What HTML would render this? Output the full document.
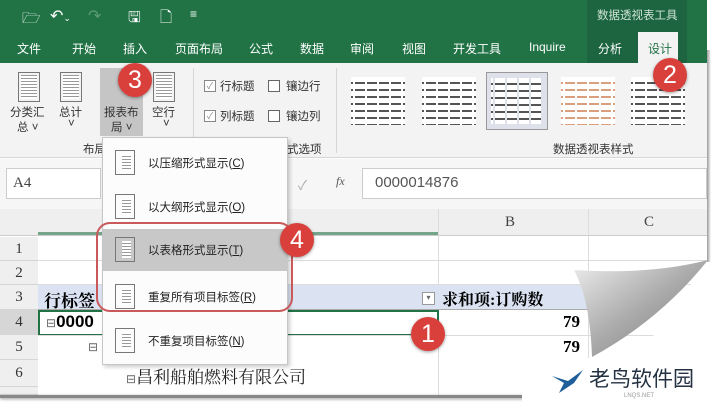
<!DOCTYPE html><html><head><meta charset="utf-8"><style>
*{margin:0;padding:0;box-sizing:border-box}
body{width:722px;height:409px;overflow:hidden;background:#fff;font-family:"Liberation Sans","Noto Sans CJK SC",sans-serif;position:relative}
.a{position:absolute}
.t{color:#fff;font-size:12px}
.r{font-size:11.5px;color:#333}
.badge{position:absolute;width:34px;height:34px;border-radius:50%;background:#d9403c;color:#fff;font-size:25px;text-align:center;line-height:34px;box-shadow:0 1px 3px rgba(0,0,0,.4)}
.rh{position:absolute;left:0;width:38px;font-family:"Liberation Serif",serif;font-size:15px;color:#333;text-align:center;border-bottom:1px solid #d5d5d5;background:#efefef}
.hl{position:absolute;left:38px;width:669px;border-bottom:1px solid #dcdcdc}
.mi{position:absolute;left:0;width:185px;height:42px;font-size:11.5px;color:#222}
.mi span{position:absolute;left:45px;top:13px}
.ic{position:absolute;left:12px;top:8px;width:20px;height:25px;border:1px solid #777;background:repeating-linear-gradient(#fff 0 2px,#999 2px 3px);background-clip:content-box;padding:3px 3px 3px 6px}
.sty{position:absolute;top:72px;width:62px;height:58px;padding:5px 4px}
.sty i{display:block;width:100%;height:100%;background:repeating-linear-gradient(90deg,transparent 0 2px,#fff 2px 4px,transparent 4px 12px),repeating-linear-gradient(#fff 0 5px,#555 5px 7px)}
</style></head><body>
<div class="a" style="left:0;top:0;width:707px;height:63px;background:#217346"></div>
<div class="a" style="left:587px;top:0;width:100px;height:63px;background:#1c6540"></div>
<div class="a t" style="left:597px;top:7px;font-size:11.5px;color:#cfe3d6">数据透视表工具</div>
<div class="a t" style="left:22px;top:8px;font-size:15px">🗁</div>
<div class="a t" style="left:50px;top:6px;font-size:16px">↶<span style="font-size:9px">⌄</span></div>
<div class="a t" style="left:88px;top:6px;font-size:16px;color:#5d9a78">↷</div>
<div class="a t" style="left:128px;top:7px;font-size:15px">🖫</div>
<div class="a t" style="left:160px;top:7px;font-size:15px">🗋</div>
<div class="a t" style="left:190px;top:7px;font-size:12px">≡</div>
<div class="a" style="left:638px;top:32px;width:40px;height:31px;background:#f3f3f3"></div>
<div class="a t" style="left:17px;top:40px">文件</div>
<div class="a t" style="left:72px;top:40px">开始</div>
<div class="a t" style="left:123px;top:40px">插入</div>
<div class="a t" style="left:175px;top:40px">页面布局</div>
<div class="a t" style="left:249px;top:40px">公式</div>
<div class="a t" style="left:300px;top:40px">数据</div>
<div class="a t" style="left:350px;top:40px">审阅</div>
<div class="a t" style="left:402px;top:40px">视图</div>
<div class="a t" style="left:453px;top:40px">开发工具</div>
<div class="a t" style="left:529px;top:40px">Inquire</div>
<div class="a t" style="left:598px;top:40px">分析</div>
<div class="a" style="left:648px;top:40px;font-size:12px;color:#217346">设计</div>
<div class="a" style="left:0;top:63px;width:707px;height:95px;background:#f3f3f3;border-bottom:1px solid #d6d6d6"></div>
<div class="a" style="left:100px;top:68px;width:43px;height:68px;background:#c5c5c5"></div>
<div class="a ic" style="left:18px;top:72px;width:22px;height:30px;padding:2px"></div>
<div class="a ic" style="left:60px;top:72px;width:22px;height:30px;padding:2px"></div>
<div class="a ic" style="left:153px;top:72px;width:22px;height:30px;padding:2px"></div>
<div class="a r" style="left:10px;top:104px">分类汇</div>
<div class="a r" style="left:17px;top:119px">总 ˅</div>
<div class="a r" style="left:59px;top:104px">总计</div>
<div class="a r" style="left:68px;top:118px">˅</div>
<div class="a r" style="left:104px;top:104px">报表布</div>
<div class="a r" style="left:111px;top:119px">局 ˅</div>
<div class="a r" style="left:152px;top:104px">空行</div>
<div class="a r" style="left:163px;top:118px">˅</div>
<div class="a r" style="left:83px;top:141px">布局</div>
<div class="a" style="left:193px;top:68px;width:1px;height:85px;background:#d6d6d6"></div>
<div class="a" style="left:336px;top:68px;width:1px;height:85px;background:#d6d6d6"></div>
<div class="a" style="left:204px;top:80px;width:12px;height:12px;border:1px solid #888;background:#fff;font-size:9px;color:#888;line-height:10px;text-align:center">✓</div>
<div class="a r" style="left:220px;top:78px">行标题</div>
<div class="a" style="left:268px;top:80px;width:12px;height:12px;border:1px solid #666;background:#fff"></div>
<div class="a r" style="left:286px;top:78px">镶边行</div>
<div class="a" style="left:204px;top:110px;width:12px;height:12px;border:1px solid #888;background:#fff;font-size:9px;color:#888;line-height:10px;text-align:center">✓</div>
<div class="a r" style="left:220px;top:108px">列标题</div>
<div class="a" style="left:268px;top:110px;width:12px;height:12px;border:1px solid #666;background:#fff"></div>
<div class="a r" style="left:286px;top:108px">镶边列</div>
<div class="a r" style="left:287px;top:141px">式选项</div>
<div class="sty" style="left:347px"><i></i></div>
<div class="sty" style="left:418px"><i></i></div>
<div class="sty" style="left:486px;background:#dfe1ea;border:1px solid #999"><i style="background:repeating-linear-gradient(90deg,transparent 0 2px,#dfe1ea 2px 4px,transparent 4px 12px),repeating-linear-gradient(#fff 0 5px,#555 5px 7px)"></i></div>
<div class="sty" style="left:557px"><i style="background:repeating-linear-gradient(90deg,transparent 0 2px,#fff 2px 4px,transparent 4px 12px),repeating-linear-gradient(#fff 0 5px,#d9a07e 5px 7px)"></i></div>
<div class="sty" style="left:627px"><i></i></div>
<div class="a r" style="left:553px;top:141px">数据透视表样式</div>
<div class="a" style="left:0;top:159px;width:707px;height:50px;background:#f6f6f6"></div>
<div class="a" style="left:6px;top:168px;width:95px;height:31px;background:#fff;border:1px solid #ccc;font-family:'Liberation Serif',serif;font-size:15px;color:#444;padding:6px 6px">A4</div>
<div class="a" style="left:298px;top:175px;color:#aaa;font-size:13px">✓</div>
<div class="a" style="left:336px;top:174px;color:#555;font-size:12px;font-style:italic;font-family:'Liberation Serif',serif">fx</div>
<div class="a" style="left:362px;top:168px;width:345px;height:31px;background:#fff;border:1px solid #ccc;font-size:15px;color:#555;padding:5px 12px">0000014876</div>
<div class="a" style="left:0;top:209px;width:707px;height:186px;background:#fff"></div>
<div class="a" style="left:0;top:209px;width:707px;height:27px;background:#efefef;border-bottom:1px solid #ccc"></div>
<div class="a" style="left:38px;top:232px;width:400px;height:3px;background:#217346;opacity:.6"></div>
<div class="a" style="left:438px;top:209px;width:1px;height:186px;background:#dcdcdc"></div>
<div class="a" style="left:588px;top:209px;width:1px;height:186px;background:#dcdcdc"></div>
<div class="a" style="left:505px;top:214px;font-family:'Liberation Serif',serif;font-size:15px;color:#444">B</div>
<div class="a" style="left:644px;top:214px;font-family:'Liberation Serif',serif;font-size:15px;color:#444">C</div>
<div class="rh" style="top:237px;height:24px;line-height:24px">1</div>
<div class="rh" style="top:261px;height:24px;line-height:24px">2</div>
<div class="rh" style="top:285px;height:25px;line-height:25px">3</div>
<div class="rh" style="top:310px;height:25px;line-height:25px;background:#d6d6d6">4</div>
<div class="rh" style="top:335px;height:25px;line-height:25px">5</div>
<div class="rh" style="top:360px;height:27px;line-height:27px">6</div>
<div class="rh" style="top:387px;height:8px"></div>
<div class="hl" style="top:236px;height:25px"></div>
<div class="hl" style="top:261px;height:24px"></div>
<div class="a" style="left:38px;top:285px;width:550px;height:25px;background:#dbe3f3;border-bottom:1px solid #aaa"></div>
<div class="a" style="left:44px;top:287px;font-family:'Liberation Serif','Noto Serif CJK SC',serif;font-size:17px;font-weight:bold">行标签</div>
<div class="a" style="left:422px;top:292px;width:13px;height:13px;border:1px solid #999;background:#fff;font-size:8px;text-align:center;color:#666">▾</div>
<div class="a" style="left:442px;top:287px;font-family:'Liberation Serif','Noto Serif CJK SC',serif;font-size:16px;font-weight:bold">求和项:订购数</div>
<div class="a" style="left:38px;top:310px;width:401px;height:26px;border:2px solid #217346"></div>
<div class="hl" style="top:335px;height:0"></div>
<div class="a" style="left:46px;top:312px;font-size:17px;font-weight:bold"><span style="font-size:12px;font-weight:normal;color:#666">⊟</span>0000</div>
<div class="a" style="left:563px;top:312px;font-family:'Liberation Serif',serif;font-size:17px;font-weight:bold">79</div>
<div class="a" style="left:563px;top:337px;font-family:'Liberation Serif',serif;font-size:17px;font-weight:bold">79</div>
<div class="a" style="left:88px;top:340px;font-size:12px;color:#666">⊟</div>
<div class="a" style="left:126px;top:363px;font-family:'Liberation Serif','Noto Serif CJK SC',serif;font-size:17px;color:#222"><span style="font-size:12px;color:#666">⊟</span>昌利船舶燃料有限公司</div>
<div class="a" style="left:0;top:395px;width:707px;height:3px;background:#888;box-shadow:0 1px 3px #999"></div>
<div class="a" style="left:707px;top:50px;width:4px;height:215px;background:linear-gradient(90deg,#999,#fff)"></div>
<svg class="a" style="left:0;top:0" width="722" height="409"><defs><linearGradient id="g" x1="0" y1="0" x2="1" y2="1"><stop offset="0" stop-color="#eee"/><stop offset=".5" stop-color="#aaa"/><stop offset="1" stop-color="#777"/></linearGradient></defs>
<path d="M707 262 L722 262 L722 409 L600 409 Z" fill="#fff"/>
<path d="M574 270 Q650 275 708 260 Q660 320 592 357 Q590 300 574 270 Z" fill="url(#g)"/></svg>
<div class="a" style="left:102px;top:137px;width:186px;height:228px;background:#fcfcfc;border:1px solid #c6c6c6;box-shadow:2px 2px 4px rgba(0,0,0,.2)">
<div class="mi" style="top:4px"><div class="ic"></div><span>以压缩形式显示(<u>C</u>)</span></div>
<div class="mi" style="top:48px"><div class="ic"></div><span>以大纲形式显示(<u>O</u>)</span></div>
<div class="mi" style="top:91px;background:#c8c8c8"><div class="ic"></div><span>以表格形式显示(<u>T</u>)</span></div>
<div class="mi" style="top:138px"><div class="ic"></div><span>重复所有项目标签(<u>R</u>)</span></div>
<div class="mi" style="top:182px"><div class="ic"></div><span>不重复项目标签(<u>N</u>)</span></div>
</div>
<div class="a" style="left:96px;top:222px;width:197px;height:90px;border:2px solid #c9595a;border-radius:14px"></div>
<div class="badge" style="left:118px;top:63px">3</div>
<div class="badge" style="left:653px;top:58px">2</div>
<div class="badge" style="left:280px;top:223px">4</div>
<div class="badge" style="left:411px;top:317px">1</div>
<div class="a" style="left:522px;top:358px;width:200px;height:51px;background:#fff"></div>
<svg class="a" style="left:550px;top:366px" width="36" height="28"><path d="M2 10 L18 15 L33 4 L24 17 L9 27 L14 17 Z" fill="#1e5f9a"/></svg>
<div class="a" style="left:589px;top:365px;font-size:21px;color:#233142;font-family:'Noto Sans CJK SC',sans-serif;line-height:26px">老鸟软件园</div>
<div class="a" style="left:624px;top:393px;font-size:6px;color:#999">LNQS.NET</div>
</body></html>
